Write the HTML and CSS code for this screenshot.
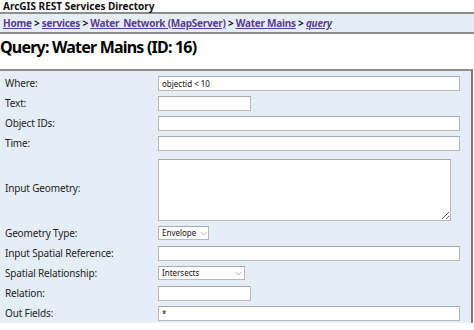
FILE: index.html
```html
<!DOCTYPE html>
<html lang="en">
<head>
  <meta charset="UTF-8" />
  <title>Query: Water Mains (ID: 16)</title>
  <link rel="stylesheet" href="styles.css">
</head>
<body>
  <div class="site-title">ArcGIS REST Services Directory</div>

  <div class="crumbs">
    <a href="#">Home</a> &gt; <a href="#">services</a> &gt; <a href="#">Water_Network (MapServer)</a> &gt; <a href="#">Water Mains</a> &gt; <a href="#"><i>query</i></a>
  </div>

  <h2>Query: Water Mains (ID: 16)</h2>

  <form class="query">
    <table>
      <tr><td class="lbl">Where:</td><td><input class="wide" type="text" value="objectid &lt; 10"></td></tr>
      <tr><td class="lbl">Text:</td><td><input class="short" type="text"></td></tr>
      <tr><td class="lbl">Object IDs:</td><td><input class="wide" type="text"></td></tr>
      <tr><td class="lbl">Time:</td><td><input class="wide" type="text"></td></tr>
      <tr class="tall"><td class="lbl">Input Geometry:</td><td><textarea></textarea></td></tr>
      <tr><td class="lbl">Geometry Type:</td><td>
        <span class="pick geom">
          <select><option>Envelope</option></select>
          <svg viewBox="0 0 8 5"><path d="M1 1l3 3 3-3" fill="none" stroke="#9aa3ad" stroke-width="1"/></svg>
        </span>
      </td></tr>
      <tr><td class="lbl">Input Spatial Reference:</td><td><input class="wide" type="text"></td></tr>
      <tr><td class="lbl">Spatial Relationship:</td><td>
        <span class="pick rel">
          <select><option>Intersects</option></select>
          <svg viewBox="0 0 8 5"><path d="M1 1l3 3 3-3" fill="none" stroke="#9aa3ad" stroke-width="1"/></svg>
        </span>
      </td></tr>
      <tr><td class="lbl">Relation:</td><td><input class="short" type="text"></td></tr>
      <tr><td class="lbl">Out Fields:</td><td><input class="wide" type="text" value="*"></td></tr>
    </table>
  </form>
</body>
</html>
```

FILE: styles.css
```css
* {
  box-sizing: border-box;
}

body {
  margin: 0;
  font-family: "Noto Sans", "DejaVu Sans", sans-serif;
  font-stretch: condensed;
  color: #111;
  background: #fff;
  overflow: hidden;
}

.site-title {
  height: 12px;
  padding-left: 3px;
  font-size: 10px;
  line-height: 12px;
  font-weight: bold;
}

.crumbs {
  height: 22px;
  padding: 0 3px;
  background: #e5eef7;
  border-top: 2px solid #8c8c8c;
  border-bottom: 2px solid #8c8c8c;
  font-size: 10px;
  line-height: 18px;
  font-weight: bold;
  letter-spacing: -0.25px;
}

.crumbs a {
  color: #5a3d8e;
}

h2 {
  margin: 0;
  height: 35px;
  padding-left: 0;
  font-size: 16px;
  line-height: 26px;
  font-weight: bold;
  letter-spacing: -0.8px;
  color: #000;
}

.query {
  margin: 0 1px 0 0;
  width: 473px;
  padding: 2px 0 0;
  background: #e5eef7;
  border-top: 2px solid #8c8c8c;
  border-right: 2px solid #7a7a7a;
}

table {
  border-collapse: collapse;
  width: 100%;
}

td {
  padding: 2px 0;
  height: 20px;
  vertical-align: middle;
}

td.lbl {
  width: 158px;
  padding-left: 5px;
  font-size: 10px;
  letter-spacing: -0.15px;
  color: #222;
}

input,
textarea,
select {
  display: block;
  margin: 0;
  font-family: "Noto Sans", "DejaVu Sans", sans-serif;
  font-stretch: condensed;
  font-size: 8px;
  color: #111;
  background: #fff;
  border: 1px solid #b8b8b8;
  border-top-color: #a8a8a8;
  border-radius: 0;
  outline: none;
}

input {
  height: 15px;
  padding: 0 3px;
}

input.wide {
  width: 302px;
}

input.short {
  width: 93px;
}

tr.tall td {
  height: 70px;
}

textarea {
  width: 293px;
  height: 62px;
  margin-top: 4px;
  resize: both;
}

.pick {
  position: relative;
  display: block;
}

.pick select {
  appearance: none;
  -webkit-appearance: none;
  height: 14px;
  padding: 0 3px;
  line-height: 12px;
}

.pick svg {
  position: absolute;
  top: 5px;
  width: 7px;
  height: 5px;
}

.geom select {
  width: 51px;
}

.geom svg {
  left: 42px;
}

.rel select {
  width: 87px;
}

.rel svg {
  left: 77px;
}
```
